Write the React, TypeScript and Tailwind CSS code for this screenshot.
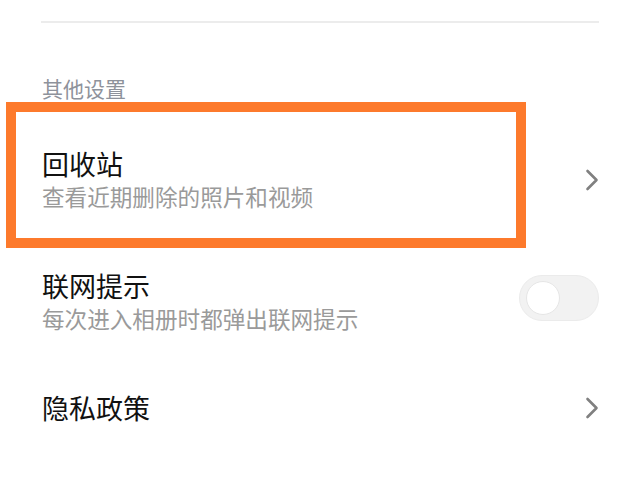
import React from 'react'

function Chevron() {
  return (
    <svg width="14" height="22" viewBox="0 0 14 22" className="shrink-0">
      <path d="M2.5 2 L11.5 11 L2.5 20" fill="none" stroke="#808080" strokeWidth="2.6" strokeLinecap="round" strokeLinejoin="round" />
    </svg>
  )
}

function Toggle() {
  return (
    <div className="w-[80px] h-[46px] rounded-full bg-[#f2f2f2] border border-[#ebebeb] flex items-center px-[6px] shrink-0 mt-[6px]">
      <div className="w-[34px] h-[34px] rounded-full bg-white border border-[#e6e6e6]" />
    </div>
  )
}

export default function App() {
  const font = { fontFamily: '"Noto Sans CJK SC", "Noto Sans", sans-serif' }
  return (
    <div className="w-[640px] h-[481px] bg-white relative overflow-hidden" style={font}>
      <div className="pt-[21px] px-[41px]">
        <div className="h-[2px] bg-[#ececec]" />
      </div>

      {/* section header */}
      <div className="pl-[42px] pt-[51px] pb-[17px] text-[21px] leading-[28px] text-[#8e929b]">其他设置</div>

      {/* recycle bin */}
      <div className="flex items-center pl-[42px] pr-[41px] py-[28px]">
        <div className="flex-1">
          <div className="text-[27px] leading-[34px] text-[#111]">回收站</div>
          <div className="text-[22.6px] leading-[32px] text-[#9a9a9a]">查看近期删除的照片和视频</div>
        </div>
        <Chevron />
      </div>

      {/* network hint */}
      <div className="flex items-start pl-[42px] pr-[41px] py-[28px]">
        <div className="flex-1">
          <div className="text-[27px] leading-[34px] text-[#111]">联网提示</div>
          <div className="text-[22.6px] leading-[32px] text-[#9a9a9a]">每次进入相册时都弹出联网提示</div>
        </div>
        <Toggle />
      </div>

      {/* privacy */}
      <div className="flex items-center pl-[42px] pr-[41px] py-[28px]">
        <div className="flex-1 text-[27px] leading-[34px] text-[#111]">隐私政策</div>
        <Chevron />
      </div>

      {/* highlight annotation */}
      <div className="absolute left-[6px] top-[102px] w-[520px] h-[146px] border-[10px] border-[#fd7a2c] pointer-events-none" />
    </div>
  )
}
